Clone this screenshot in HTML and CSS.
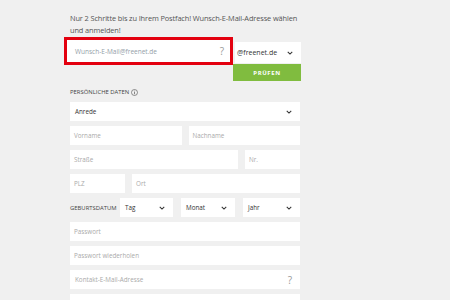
FILE: index.html
```html
<!DOCTYPE html>
<html lang="de">
<head>
<meta charset="utf-8">
<title>freenet Mail Registrierung</title>
<link rel="stylesheet" href="styles.css">
</head>
<body>
<div class="page">
  <p class="intro">Nur 2 Schritte bis zu Ihrem Postfach! Wunsch-E-Mail-Adresse wählen<br>und anmelden!</p>
  <div class="email-row">
    <div class="wish">
      <span class="ph">Wunsch-E-Mail@freenet.de</span>
      <span class="q">?</span>
    </div>
    <div class="side">
      <div class="domain"><span>@freenet.de</span><svg class="chev" viewBox="0 0 8 5" width="6" height="4"><path d="M1 1l3 3 3-3" fill="none" stroke="#333" stroke-width="1.4"/></svg></div>
      <div class="btn">PRÜFEN</div>
    </div>
  </div>
  <form class="form">
    <div class="section">PERSÖNLICHE DATEN <svg class="info" viewBox="0 0 10 10" width="7" height="7"><circle cx="5" cy="5" r="4.3" fill="none" stroke="#555" stroke-width="0.9"/><path d="M5 4.2v3.3M5 2.4v1" stroke="#555" stroke-width="1"/></svg></div>
    <div class="row"><div class="field grow sel dark">Anrede<svg class="chev" viewBox="0 0 8 5" width="6" height="4"><path d="M1 1l3 3 3-3" fill="none" stroke="#333" stroke-width="1.4"/></svg></div></div>
    <div class="row"><div class="field half">Vorname</div><div class="field half">Nachname</div></div>
    <div class="row"><div class="field grow">Straße</div><div class="field nr">Nr.</div></div>
    <div class="row"><div class="field plz">PLZ</div><div class="field grow">Ort</div></div>
    <div class="row birth">
      <span class="blabel">GEBURTSDATUM</span>
      <div class="field sel dark tag">Tag<svg class="chev" viewBox="0 0 8 5" width="6" height="4"><path d="M1 1l3 3 3-3" fill="none" stroke="#333" stroke-width="1.4"/></svg></div>
      <div class="field sel dark monat">Monat<svg class="chev" viewBox="0 0 8 5" width="6" height="4"><path d="M1 1l3 3 3-3" fill="none" stroke="#333" stroke-width="1.4"/></svg></div>
      <div class="field sel dark jahr">Jahr<svg class="chev" viewBox="0 0 8 5" width="6" height="4"><path d="M1 1l3 3 3-3" fill="none" stroke="#333" stroke-width="1.4"/></svg></div>
    </div>
    <div class="row"><div class="field grow">Passwort</div></div>
    <div class="row"><div class="field grow">Passwort wiederholen</div></div>
    <div class="row"><div class="field grow sel">Kontakt-E-Mail-Adresse<span class="q">?</span></div></div>
    <div class="row"><div class="field grow"></div></div>
  </form>
</div>
</body>
</html>
```
FILE: styles.css
```css
html, body {
  margin: 0;
  background: #f0f0f0;
  font-family: "Open Sans", "Noto Sans", sans-serif;
  overflow: hidden;
}
.page {
  width: 240px;
  padding: 12px 0 0 64px;
}
.intro {
  margin: 0;
  padding-left: 6px;
  white-space: nowrap;
  font-size: 7.4px;
  letter-spacing: -0.12px;
  line-height: 12px;
  color: #555;
}
.email-row {
  display: flex;
  margin-top: 1px;
}
.wish {
  box-sizing: border-box;
  width: 169px;
  height: 28px;
  border: 3px solid #e3000f;
  background: #fff;
  display: flex;
  align-items: center;
  justify-content: space-between;
  padding: 0 6px 0 8px;
}
.ph {
  font-size: 6.5px;
  color: #94a0a8;
}
.q {
  font-size: 10px;
  color: #999;
}
.side {
  display: flex;
  flex-direction: column;
  width: 68px;
}
.domain {
  margin: 5px 0 0 2px;
  height: 21px;
  background: #fff;
  display: flex;
  align-items: center;
  justify-content: space-between;
  padding: 0 8px 0 2px;
  font-size: 7px;
  color: #333;
}
.btn {
  margin-top: 1px;
  height: 17px;
  background: #80bc3f;
  color: #fff;
  font-size: 6px;
  font-weight: 700;
  letter-spacing: 0.6px;
  display: flex;
  align-items: center;
  justify-content: center;
}
.form {
  margin: 0;
  padding: 7px 0 0 6px;
  width: 230px;
}
.section {
  font-size: 5.9px;
  color: #444;
  height: 8px;
  display: flex;
  align-items: center;
  gap: 2px;
  margin-bottom: 6px;
}
.row {
  display: flex;
  gap: 7px;
  margin-bottom: 5px;
}
.field {
  box-sizing: border-box;
  height: 19px;
  background: #fff;
  font-size: 6.3px;
  color: #aaa;
  display: flex;
  align-items: center;
  padding: 0 4px;
}
.field.dark { color: #333; }
.sel {
  justify-content: space-between;
  padding: 0 8px 0 5px;
}
.half { flex: 1; }
.grow { flex: 1; }
.nr { width: 55px; }
.plz { width: 55px; }
.birth { gap: 0; align-items: center; }
.blabel {
  font-size: 5.9px;
  color: #444;
  width: 50px;
}
.tag { width: 53px; margin-right: 8px; }
.monat { width: 54px; margin-right: 8px; }
.jahr { width: 57px; }
```
